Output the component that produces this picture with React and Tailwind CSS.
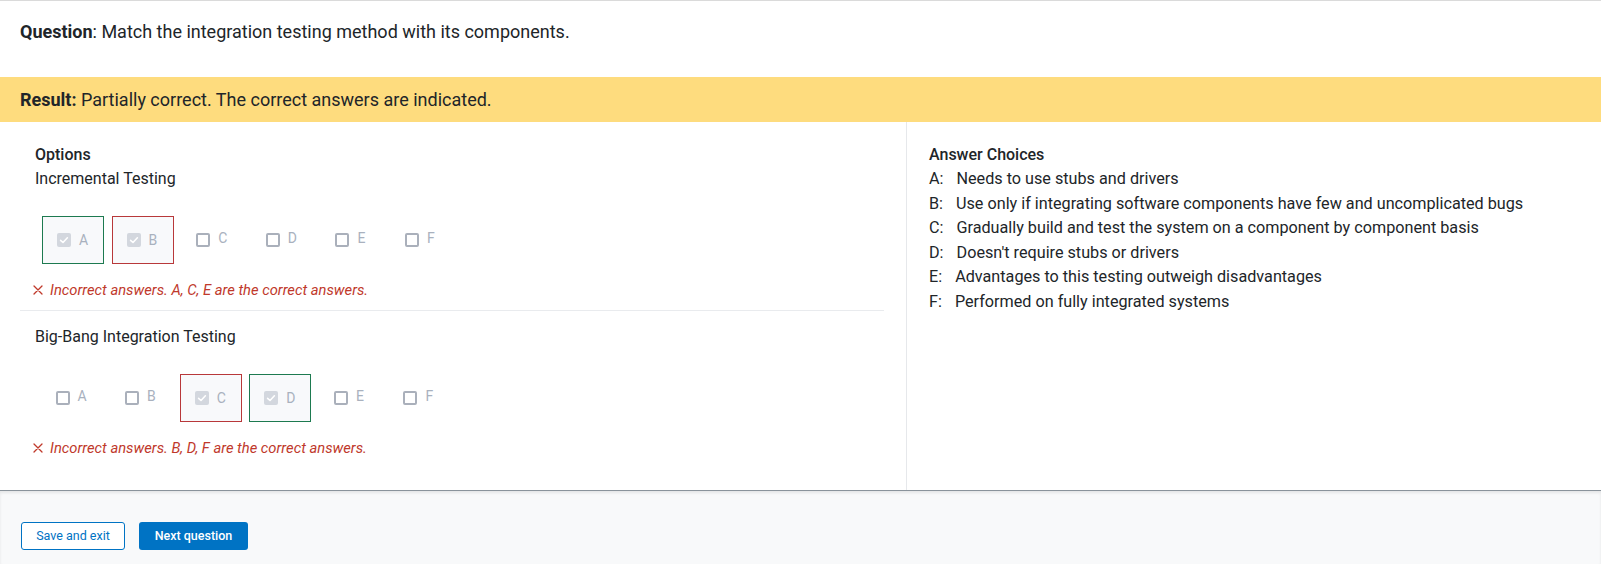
import React from "react";

const Check = () => (
  <svg viewBox="0 0 14 14" className="w-[14px] h-[14px]">
    <rect x="0" y="0" width="14" height="14" rx="2" fill="#d3d7de" />
    <path d="M3.6 7.3 L6 9.5 L10.4 4.8" fill="none" stroke="#ffffff" strokeWidth="1.6" strokeLinecap="round" strokeLinejoin="round" />
  </svg>
);

const Empty = () => (
  <span className="block w-[14px] h-[14px] rounded-[2px] border-2 border-[#aab0bb] bg-white shrink-0" />
);

const Cross = () => (
  <svg viewBox="0 0 10 10" className="w-[10px] h-[10px]">
    <path d="M1 1 L9 9 M9 1 L1 9" stroke="#c0392b" strokeWidth="1.3" strokeLinecap="round" />
  </svg>
);

function Slot({ letter, state }) {
  if (state === "none") {
    return (
      <div className="w-[62px] h-[48px] pl-[15px] flex items-center">
        <div className="flex items-start gap-2">
          <Empty />
          <span className="text-sm leading-[14px] -mt-[2px] text-[#a9b1be]">{letter}</span>
        </div>
      </div>
    );
  }
  const border = state === "green" ? "border-[#1d7a50]" : "border-[#b8383a]";
  return (
    <div className={`w-[62px] h-[48px] pl-[14px] flex items-center border ${border} bg-[#f8f9fb]`}>
      <div className="flex items-center gap-2">
        <Check />
        <span className="text-sm leading-[14px] text-[#a9b1be]">{letter}</span>
      </div>
    </div>
  );
}

function Group({ title, states, error, shift }) {
  const letters = ["A", "B", "C", "D", "E", "F"];
  return (
    <div>
      <div className="pl-[15px] text-base leading-6">{title}</div>
      <div className={`mt-[25px] ${shift ? "pl-[20.5px]" : "pl-[22px]"} flex gap-[7.6px]`}>
        {letters.map((l, i) => (
          <Slot key={l} letter={l} state={states[i]} />
        ))}
      </div>
      <div className="mt-4 pl-[13px] flex items-center gap-[7px] text-[14.75px] leading-5 italic text-[#c0392b]">
        <Cross />
        <span>{error}</span>
      </div>
    </div>
  );
}

export default function App() {
  const choices = [
    ["A:", "Needs to use stubs and drivers"],
    ["B:", "Use only if integrating software components have few and uncomplicated bugs"],
    ["C:", "Gradually build and test the system on a component by component basis"],
    ["D:", "Doesn't require stubs or drivers"],
    ["E:", "Advantages to this testing outweigh disadvantages"],
    ["F:", "Performed on fully integrated systems"],
  ];
  return (
    <div className="w-[1601px] h-[564px] bg-white text-[#212529] font-['Roboto','Liberation_Sans',sans-serif] flex flex-col overflow-hidden">
      <div className="border-t border-[#dadada] pt-[18px] pb-[32px] px-5 text-lg leading-[26px]">
        <span className="font-bold">Question</span>: Match the integration testing method with its components.
      </div>
      <div className="h-[45px] bg-[#fedc7e] px-5 flex items-center text-lg">
        <span className="font-bold">Result:</span>&nbsp;Partially correct. The correct answers are indicated.
      </div>
      <div className="flex h-[368px]">
        <div className="w-[907px] border-r border-[#e6e8eb] pl-5 pr-[22px] pt-[21px]">
          <div className="pl-[15px] text-base leading-6 font-medium">Options</div>
          <Group
            title="Incremental Testing"
            states={["green", "red", "none", "none", "none", "none"]}
            error="Incorrect answers. A, C, E are the correct answers."
          />
          <div className="mt-[10px] mb-[14px] border-t border-[#e9ebee]" />
          <Group
            title="Big-Bang Integration Testing"
            states={["none", "none", "red", "green", "none", "none"]}
            error="Incorrect answers. B, D, F are the correct answers."
            shift
          />
        </div>
        <div className="flex-1 pl-[22px] pt-[21px]">
          <div className="text-base leading-6 font-medium">Answer Choices</div>
          {choices.map(([l, t]) => (
            <div key={l} className="text-[16.2px] leading-[24.5px] flex">
              <span className="mr-[13px]">{l}</span>
              <span>{t}</span>
            </div>
          ))}
        </div>
      </div>
      <div className="flex-1 border-t border-[#8a939b] bg-[#f8f9fa] shadow-[inset_0_2px_3px_rgba(0,0,0,0.08)] pl-[21px] pt-[31px] flex items-start gap-[14px]">
        <button className="h-[28px] w-[104px] rounded-[3px] border border-[#0073c4] bg-white text-[#0073c4] text-[12.5px]">
          Save and exit
        </button>
        <button className="h-[28px] w-[109px] rounded-[3px] bg-[#0073c4] text-white text-[12.5px] font-medium">
          Next question
        </button>
      </div>
    </div>
  );
}
